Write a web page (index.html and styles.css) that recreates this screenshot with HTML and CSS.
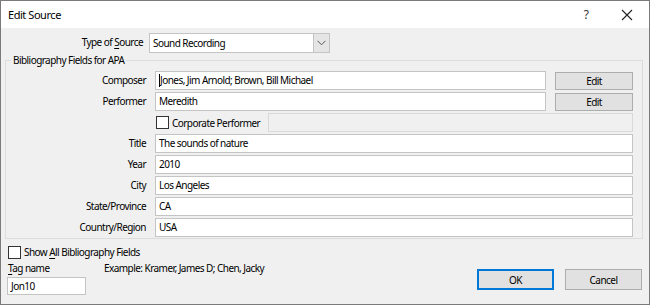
FILE: index.html
```html
<!DOCTYPE html>
<html lang="en">

<head>
    <meta charset="UTF-8">
    <title>Edit Source</title>
    <link rel="stylesheet" href="styles.css">
</head>

<body>
    <div class="window">
        <div class="titlebar">
            <div class="title">Edit Source</div>
            <div class="help">?</div>
            <div class="close">
                <svg width="12" height="12" viewBox="0 0 12 12">
                    <path d="M1 1 L11 11 M11 1 L1 11" stroke="#222" stroke-width="1.1" fill="none" />
                </svg>
            </div>
        </div>

        <div class="content">
            <div class="type-row">
                <label class="label">Type of <u>S</u>ource</label>
                <div class="combo">
                    <span class="combo-text">Sound Recording</span>
                    <span class="combo-btn">
                        <svg width="9" height="6" viewBox="0 0 9 6">
                            <path d="M0.5 0.8 L4.5 4.8 L8.5 0.8" stroke="#555" stroke-width="1" fill="none" />
                        </svg>
                    </span>
                </div>
            </div>

            <fieldset class="group">
                <legend>Bibliography Fields for APA</legend>
                <div class="fields">
                    <label class="label">Composer</label>
                    <div class="field focused"><span class="caret"></span>Jones, Jim Arnold; Brown, Bill Michael</div>
                    <button class="btn">Edit</button>

                    <label class="label">Performer</label>
                    <div class="field">Meredith</div>
                    <button class="btn">Edit</button>

                    <div class="corp wide">
                        <span class="check"></span>
                        <span class="corp-label">Corporate Performer</span>
                        <div class="field disabled"></div>
                    </div>

                    <label class="label">Title</label>
                    <div class="field wide">The sounds of nature</div>

                    <label class="label">Year</label>
                    <div class="field wide">2010</div>

                    <label class="label">City</label>
                    <div class="field wide">Los Angeles</div>

                    <label class="label">State/Province</label>
                    <div class="field wide">CA</div>

                    <label class="label">Country/Region</label>
                    <div class="field wide">USA</div>
                </div>
            </fieldset>

            <div class="show-all">
                <span class="check"></span>
                <span>Show <u>A</u>ll Bibliography Fields</span>
            </div>

            <div class="footer">
                <div class="tag">
                    <label><u>T</u>ag name</label>
                    <div class="field tag-field">Jon10</div>
                </div>
                <div class="example">Example: Kramer, James D; Chen, Jacky</div>
                <div class="actions">
                    <button class="btn big default">OK</button>
                    <button class="btn big">Cancel</button>
                </div>
            </div>
        </div>
    </div>
</body>

</html>
```

FILE: styles.css
```css
* {
    box-sizing: border-box;
}

body {
    margin: 0px;
    padding: 0px;
    background-color: #ffffff;
    font-family: "Noto Sans", "Open Sans", sans-serif;
    font-size: 10px;
    letter-spacing: -0.55px;
    color: #000000;
}

u {
    text-decoration-thickness: 1px;
    text-underline-offset: 2px;
}

.window {
    width: 650px;
    height: 305px;
    border: 1px solid #7a7a7a;
    background-color: #f0f0f0;
    display: flex;
    flex-direction: column;
}

/* title bar */
.titlebar {
    height: 27px;
    background-color: #ffffff;
    display: flex;
    align-items: center;
    padding-left: 7px;
}

.title {
    font-size: 11px;
    letter-spacing: -0.45px;
    flex: 1;
}

.help {
    font-size: 12px;
    width: 20px;
    text-align: center;
    margin-right: 24px;
    color: #333;
}

.close {
    width: 14px;
    height: 14px;
    margin-right: 15px;
    display: flex;
    align-items: center;
    justify-content: center;
}

.content {
    flex: 1;
}

.label {
    text-align: right;
    line-height: 19px;
}

/* type of source */
.type-row {
    display: grid;
    grid-template-columns: 142px 181px;
    column-gap: 6px;
    margin-top: 5px;
}

.combo {
    height: 20px;
    background-color: #ffffff;
    border: 1px solid #c4c4c4;
    display: flex;
    align-items: center;
}

.combo-text {
    flex: 1;
    padding-left: 3px;
}

.combo-btn {
    width: 16px;
    height: 18px;
    background-color: #e5e5e5;
    border-left: 1px solid #c4c4c4;
    display: flex;
    align-items: center;
    justify-content: center;
}

/* group box */
.group {
    margin: 0px 6px 0px 4px;
    padding: 3px 8px 1px 0px;
    border: 1px solid #dcdcdc;
    min-width: 0;
}

.group legend {
    margin-left: 5px;
    padding: 0px 2px;
    line-height: 15px;
}

.fields {
    display: grid;
    grid-template-columns: 140px 391px 78px;
    column-gap: 9px;
    row-gap: 2px;
    grid-auto-rows: 19px;
}

.field {
    height: 19px;
    background-color: #ffffff;
    border: 1px solid #c4c4c4;
    line-height: 17px;
    padding-left: 3px;
    white-space: nowrap;
    overflow: hidden;
}

.wide {
    grid-column: 2 / 4;
}

.focused {
    display: flex;
    align-items: center;
}

.caret {
    width: 1px;
    height: 13px;
    background-color: #000;
}

.field.disabled {
    flex: 1;
    background-color: #f0f0f0;
    border-color: #d9d9d9;
}

.btn {
    font-family: inherit;
    font-size: 10px;
    letter-spacing: inherit;
    color: #000000;
    height: 18px;
    margin-top: 1px;
    padding: 0px;
    background-color: #e1e1e1;
    border: 1px solid #adadad;
    border-radius: 0px;
}

.corp {
    display: flex;
    align-items: center;
    padding-left: 1px;
}

.corp-label {
    margin-left: 3px;
    width: 96px;
    flex: none;
    white-space: nowrap;
}

.check {
    width: 13px;
    height: 13px;
    background-color: #ffffff;
    border: 1px solid #333333;
    flex: none;
}

/* bottom part */
.show-all {
    display: flex;
    align-items: center;
    gap: 3px;
    margin: 6px 0px 0px 7px;
    line-height: 15px;
}

.footer {
    display: flex;
    padding: 1px 7px 0px 6px;
}

.tag {
    display: flex;
    flex-direction: column;
}

.tag label {
    line-height: 15px;
    margin-left: 1px;
}

.tag-field {
    width: 79px;
    height: 18px;
    margin-top: 1px;
}

.example {
    margin-left: 18px;
    line-height: 15px;
}

.actions {
    margin-left: auto;
    margin-top: 8px;
    display: flex;
    gap: 11px;
}

.btn.big {
    width: 77px;
    height: 21px;
    margin-top: 0px;
}

.btn.default {
    border-color: #0078d7;
    box-shadow: inset 0 0 0 1px #0078d7;
}
```
